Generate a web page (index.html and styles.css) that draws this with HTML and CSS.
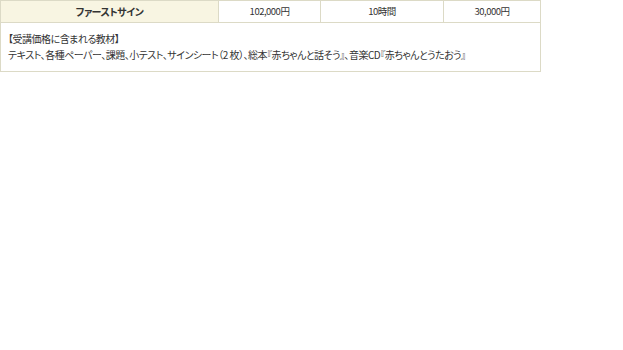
FILE: index.html
```html
<!DOCTYPE html>
<html lang="ja">
<head>
<meta charset="utf-8">
<link rel="stylesheet" href="styles.css">
</head>
<body>
<table class="price">
  <colgroup>
    <col class="c1"><col class="c2"><col class="c3"><col class="c4">
  </colgroup>
  <tr class="head-row">
    <th class="course">ファーストサイン</th>
    <td class="num">102,000円</td>
    <td class="num">10時間</td>
    <td class="num">30,000円</td>
  </tr>
  <tr>
    <td class="materials" colspan="4">
      <div>【受講価格に含まれる教材】</div>
      <div>テキスト、各種ペーパー、課題、小テスト、サインシート（2 枚）、総本『赤ちゃんと話そう』、音楽CD『赤ちゃんとうたおう』</div>
    </td>
  </tr>
</table>
</body>
</html>
```

FILE: styles.css
```css
html, body {
  margin: 0;
  padding: 0;
  background: #ffffff;
}
body {
  font-family: "Noto Sans CJK JP", "Noto Sans", sans-serif;
  font-size: 10px;
  letter-spacing: -0.5px;
  color: #333333;
  font-feature-settings: "palt";
}
.price {
  border-collapse: collapse;
  table-layout: fixed;
  width: 540px;
}
.c1 { width: 218px; }
.c2 { width: 102px; }
.c3 { width: 123px; }
.c4 { width: 97px; }
.price th, .price td {
  border: 1px solid #dcdac6;
  padding: 0;
}
.head-row th, .head-row td {
  height: 21px;
  text-align: center;
  line-height: 21px;
}
.course {
  background: #f8f5e2;
  font-weight: bold;
  color: #333333;
}
.num {
  background: #ffffff;
  font-size: 9.5px;
}
.materials {
  padding: 8px 7px !important;
  line-height: 16px;
  text-align: left;
  white-space: nowrap;
}
```
